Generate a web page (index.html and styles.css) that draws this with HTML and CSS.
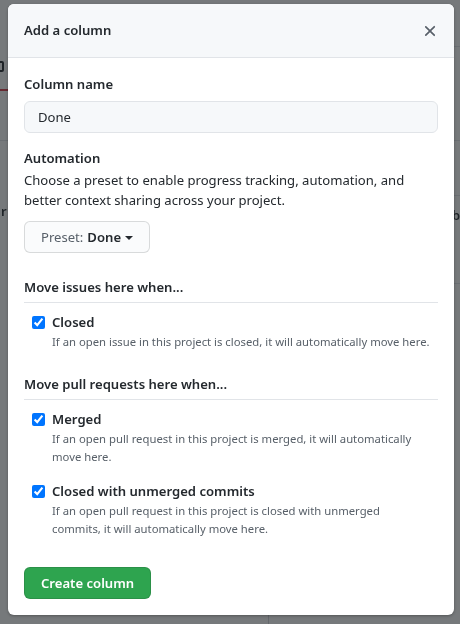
FILE: index.html
```html
<!DOCTYPE html>
<html>
<head>
<meta charset="utf-8">
<link rel="stylesheet" href="styles.css">
</head>
<body>
<div class="page">
  <span class="bg-icon"></span>
  <span class="bg-red"></span>
  <span class="bg-line bg-l1"></span>
  <span class="bg-text bg-t1">r</span>
  <span class="bg-line bg-r1"></span>
  <span class="bg-line bg-r2"></span>
  <span class="bg-line bg-r3"></span>
  <span class="bg-text bg-t2">b</span>
  <span class="bg-line bg-r4"></span>
  <span class="bg-vline"></span>
</div>
<div class="overlay"></div>
<div class="modal">
  <div class="modal-header">
    <h2 class="modal-title">Add a column</h2>
    <button class="close" aria-label="Close">
      <svg width="18" height="18" viewBox="0 0 16 16"><path d="M3.72 3.72a.75.75 0 0 1 1.06 0L8 6.94l3.22-3.220a.75.75 0 1 1 1.06 1.06L9.06 8l3.22 3.22a.75.75 0 1 1-1.06 1.06L8 9.06l-3.22 3.22a.75.75 0 0 1-1.06-1.06L6.94 8 3.72 4.78a.75.75 0 0 1 0-1.06z" fill="currentColor"/></svg>
    </button>
  </div>
  <div class="modal-body">
    <label class="field-label">Column name</label>
    <input class="text-input" type="text" value="Done">
    <div class="field-label automation">Automation</div>
    <p class="help">Choose a preset to enable progress tracking, automation, and better context sharing across your project.</p>
    <button class="btn-preset"><span class="muted">Preset:</span> <b>Done</b><span class="caret"></span></button>

    <div class="section-title first">Move issues here when...</div>
    <div class="check-row">
      <input type="checkbox" checked>
      <div class="check-text">
        <div class="check-label">Closed</div>
        <div class="note">If an open issue in this project is closed, it will automatically move here.</div>
      </div>
    </div>

    <div class="section-title">Move pull requests here when...</div>
    <div class="check-row">
      <input type="checkbox" checked>
      <div class="check-text">
        <div class="check-label">Merged</div>
        <div class="note">If an open pull request in this project is merged, it will automatically<br>move here.</div>
      </div>
    </div>
    <div class="check-row second">
      <input type="checkbox" checked>
      <div class="check-text">
        <div class="check-label">Closed with unmerged commits</div>
        <div class="note">If an open pull request in this project is closed with unmerged<br>commits, it will automatically move here.</div>
      </div>
    </div>

    <button class="btn-primary">Create column</button>
  </div>
</div>
</body>
</html>
```

FILE: styles.css
```css
* { box-sizing: border-box; }
html, body { margin: 0; height: 100%; }
body {
  background: #fff;
  font-family: "Noto Sans", "Open Sans", sans-serif;
  font-size: 13.1px;
  color: #24292e;
  overflow: hidden;
}
.page { position: fixed; inset: 0; }
.bg-icon { position: absolute; left: -6px; top: 61px; width: 10px; height: 11px; border: 2px solid #24292e; border-radius: 2px; }
.bg-red { position: absolute; left: 0; top: 89px; width: 10px; height: 2px; background: #d73a49; }
.bg-line { position: absolute; height: 1px; background: #e1e4e8; }
.bg-l1 { left: 0; top: 140px; width: 10px; }
.bg-r1 { left: 450px; top: 46px; width: 10px; }
.bg-r2 { left: 450px; top: 140px; width: 10px; }
.bg-r3 { left: 450px; top: 195px; width: 10px; }
.bg-r4 { left: 450px; top: 283px; width: 10px; }
.bg-text { position: absolute; font-weight: 600; font-size: 13px; color: #24292e; }
.bg-t1 { left: 1px; top: 202px; }
.bg-t2 { left: 452px; top: 206px; }
.bg-vline { position: absolute; left: 268px; top: 600px; width: 1px; height: 30px; background: #d1d5da; }
.overlay { position: fixed; inset: 0; background: rgba(27, 31, 35, 0.6); }

.modal {
  position: fixed;
  top: 4px;
  left: 8px;
  width: 446px;
  background: #fff;
  border-radius: 6px;
  box-shadow: 0 1px 3px rgba(0,0,0,.3);
  overflow: hidden;
}
.modal-header {
  display: flex;
  align-items: center;
  justify-content: space-between;
  padding: 16px;
  background: #f6f8fa;
  border-bottom: 1px solid #e1e4e8;
}
.modal-title { margin: 0; font-size: 13.1px; font-weight: 600; line-height: 21px; }
.close {
  border: 0; background: none; padding: 0; margin-right: -1px;
  width: 18px; height: 18px; color: #586069; display: flex; cursor: pointer;
}
.modal-body { padding: 16px; }
.field-label { display: block; font-weight: 600; line-height: 21px; }
.text-input {
  display: block;
  width: 100%;
  height: 32px;
  margin-top: 6px;
  padding: 5px 13px;
  font: inherit;
  color: #24292e;
  background: #f6f8fa;
  border: 1px solid #e1e4e8;
  border-radius: 6px;
  outline: none;
}
.automation { margin-top: 15px; }
.help { margin: 1px 0 11px; line-height: 20px; }
.btn-preset {
  display: inline-flex;
  align-items: center;
  height: 32px;
  padding: 0 16px;
  font: inherit;
  color: #24292e;
  background: #fafbfc;
  border: 1px solid rgba(27,31,35,.15);
  border-radius: 6px;
}
.btn-preset .muted { color: #586069; margin-right: 4px; }
.btn-preset b { font-weight: 600; }
.caret {
  margin-left: 4px;
  margin-top: 1px;
  width: 0; height: 0;
  border-left: 4px solid transparent;
  border-right: 4px solid transparent;
  border-top: 4px solid #24292e;
}
.section-title {
  font-weight: 600;
  line-height: 21px;
  padding-bottom: 4px;
  border-bottom: 1px solid #e1e4e8;
  margin-top: 23px;
}
.section-title.first { margin-top: 24px; }
.check-row {
  display: flex;
  align-items: flex-start;
  padding-left: 8px;
  margin-top: 9px;
}
.check-row.second { margin-top: 15px; }
.check-row input {
  margin: 4px 7px 0 0;
  width: 13px; height: 13px;
  flex: none;
}
.check-label { font-weight: 600; line-height: 21px; }
.note { font-size: 11.3px; line-height: 18px; color: #586069; }
.btn-primary {
  display: block;
  margin-top: 29px;
  height: 32px;
  padding: 0 16px;
  font: inherit;
  font-weight: 600;
  color: #fff;
  background: #2ea44f;
  border: 1px solid rgba(27,31,35,.15);
  border-radius: 6px;
}
```
